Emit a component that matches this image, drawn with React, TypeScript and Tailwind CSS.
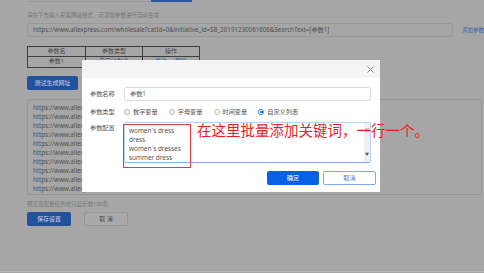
import React from "react";

const urlLines = Array.from({ length: 10 }, () => "https://www.aliexpress.com/wholesale?catId=0&initiative_id=SB_20191230061606&SearchText=women's dress");

export default function App() {
  return (
    <div
      className="relative w-[484px] h-[273px] overflow-hidden bg-[#a6a6a6] text-[#4a4a4a]"
      style={{ fontFamily: '"Noto Sans", "Noto Sans CJK SC", sans-serif' }}
    >
      {/* page underneath the overlay */}
      <div className="flex flex-col pl-[27px] h-[272px] border-b border-[#b9b9b9]">
        <div className="flex h-[2px] pl-[1px]">
          <div className="w-[123px] border-b border-[#999]" />
          <div className="w-[41px] bg-[#2a57a3]" />
        </div>
        <div className="mt-[9px] h-[8px] text-[5.5px] leading-[8px] text-[#747474]">
          请在下方输入采集网址格式，可添加参数进行自动生成
        </div>
        <div className="mt-[4px] flex items-center h-[14px]">
          <div className="w-[427px] h-[14px] border border-[#999] rounded-[2px] flex items-center pl-[5px] text-[6.2px] leading-[8px] text-[#505050] whitespace-nowrap overflow-hidden">
            https://www.aliexpress.com/wholesale?catId=0&amp;initiative_id=SB_20191230061606&amp;SearchText=[参数1]
          </div>
          <div className="ml-[9px] text-[5.5px] leading-[8px] text-[#3a5fa6] whitespace-nowrap">添加参数</div>
        </div>
        <div className="mt-[9px] w-[173px] border border-[#3e3e3e] text-[6px] text-[#464646]">
          <div className="grid grid-cols-[58px_57px_1fr] h-[10px] leading-[9px] border-b border-[#3e3e3e] text-center">
            <div className="border-r border-[#3e3e3e]">参数名</div>
            <div className="border-r border-[#3e3e3e]">参数类型</div>
            <div>操作</div>
          </div>
          <div className="grid grid-cols-[58px_57px_1fr] h-[10px] leading-[9px] text-center">
            <div className="border-r border-[#3e3e3e]">参数1</div>
            <div className="border-r border-[#3e3e3e]">自定义列表</div>
            <div className="text-[#2f59a6] flex justify-center gap-[8px]">
              <span>修改</span>
              <span>删除</span>
            </div>
          </div>
        </div>
        <div className="mt-[8px] w-[51px] h-[14px] rounded-[2px] bg-[#23519e] text-[#c9d3e6] text-[6px] leading-[8px] flex items-center justify-center">
          测试生成网址
        </div>
        <div className="mt-[9px] w-[455px] h-[96px] border border-[#969696] rounded-[2px] pl-[5px] pt-[3px] overflow-hidden">
          {urlLines.map((l, i) => (
            <div key={i} className="h-[9px] leading-[9px] text-[6.2px] text-[#505050] whitespace-nowrap">
              {l}
            </div>
          ))}
        </div>
        <div className="mt-[5px] h-[8px] text-[5.5px] leading-[8px] text-[#747474]">预览及配置任务时只显示前100条</div>
        <div className="mt-[4px] flex gap-[13px]">
          <div className="w-[44px] h-[14px] rounded-[2px] bg-[#23519e] text-[#c9d3e6] text-[6px] leading-[8px] flex items-center justify-center">
            保存设置
          </div>
          <div className="w-[44px] h-[14px] rounded-[2px] border border-[#959595] bg-[#a9a9a9] text-[#4a4a4a] text-[6px] leading-[8px] flex items-center justify-center">
            取 消
          </div>
        </div>
      </div>

      {/* modal */}
      <div className="absolute left-[82px] top-[60px] w-[298px] h-[132px] bg-white flex flex-col">
        <div className="h-[18px] bg-[#f4f4f4] flex items-center justify-end pr-[6px]">
          <svg width="7" height="7" viewBox="0 0 7 7" className="mt-[1px]">
            <path d="M0.5 0.5 L6.5 6.5 M6.5 0.5 L0.5 6.5" stroke="#777" strokeWidth="0.9" />
          </svg>
        </div>
        <div className="flex flex-col pl-[8px] pr-[9px]">
          <div className="mt-[9px] flex items-center h-[14px]">
            <div className="w-[34px] text-[6.2px] leading-[8px] text-[#555]">参数名称</div>
            <div className="flex-1 h-[14px] border border-[#dcdcdc] rounded-[2px] flex items-center pl-[5px] text-[6.2px] leading-[8px] text-[#555]">
              参数1
            </div>
          </div>
          <div className="mt-[5px] flex items-center h-[12px] text-[6.2px] leading-[8px] text-[#555]">
            <div className="w-[34px]">参数类型</div>
            <div className="flex items-center">
              {["数字变量", "字母变量", "时间变量"].map((t) => (
                <div key={t} className="flex items-center mr-[11px]">
                  <div className="w-[6px] h-[6px] rounded-full border border-[#b5b5b5] mr-[3px]" />
                  <span>{t}</span>
                </div>
              ))}
              <div className="flex items-center">
                <div className="w-[6px] h-[6px] rounded-full border border-[#3b7de0] mr-[3px] flex items-center justify-center">
                  <div className="w-[2.5px] h-[2.5px] rounded-full bg-[#1e6ae0]" />
                </div>
                <span>自定义列表</span>
              </div>
            </div>
          </div>
          <div className="mt-[4px] flex items-start">
            <div className="w-[34px] pt-[2px] text-[6.2px] leading-[8px] text-[#555]">参数配置</div>
            <div className="flex-1 h-[41px] border border-[#b8d3f3] border-b-[#86b2ec] rounded-[2px] flex">
              <div className="flex-1 pl-[4px] pt-[3px] text-[6.4px] text-[#555]">
                <div className="h-[9px] leading-[9px]">women`s dress</div>
                <div className="h-[9px] leading-[9px]">dress</div>
                <div className="h-[9px] leading-[9px]">women`s dresses</div>
                <div className="h-[9px] leading-[9px]">summer dress</div>
              </div>
              <div className="w-[6px] bg-[#f1f1f1] flex flex-col justify-between items-center py-[5px]">
                <div className="w-[4px] h-[4px] bg-[#c8c8c8]" />
                <div className="text-[4px] leading-[4px] text-[#555]">▼</div>
              </div>
            </div>
          </div>
          <div className="mt-[8px] flex justify-end gap-[4px] mr-[-5px]">
            <div className="w-[52px] h-[14px] rounded-[2px] bg-[#0a5fe4] text-white text-[6.2px] leading-[8px] flex items-center justify-center">
              确定
            </div>
            <div className="w-[53px] h-[14px] rounded-[2px] border border-[#7ea6e8] bg-white text-[#4c7fd6] text-[6.2px] leading-[8px] flex items-center justify-center">
              取消
            </div>
          </div>
        </div>
      </div>

      {/* annotation */}
      <div className="absolute left-[123px] top-[124px] w-[68px] h-[44px] border-[1.5px] border-[#e8393f]" />
      <div
        className="absolute left-[197px] top-[120px] text-[14.5px] leading-[20px] text-[#f01c1c] whitespace-nowrap"
        style={{ fontFamily: '"Noto Sans CJK SC", sans-serif' }}
      >
        在这里批量添加关键词，一行一个。
      </div>
    </div>
  );
}
